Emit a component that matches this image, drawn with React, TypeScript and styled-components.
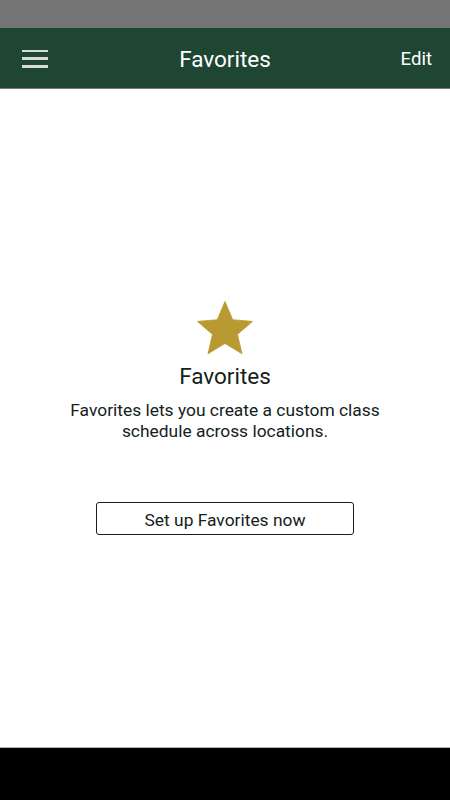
import React from "react";
import styled, { createGlobalStyle } from "styled-components";

const Global = createGlobalStyle`
  html, body { margin: 0; padding: 0; background: #ffffff; }
  body { font-family: Roboto, "Noto Sans", sans-serif; }
  #root { height: 800px; }
`;

const Screen = styled.div`
  width: 450px;
  height: 800px;
  display: flex;
  flex-direction: column;
  background: #ffffff;
`;

const StatusBar = styled.div`
  height: 28px;
  background: #757575;
  flex: none;
`;

const AppBar = styled.header`
  height: 60px;
  background: #1e4633;
  border-bottom: 1px solid #6f7f77;
  display: flex;
  align-items: center;
  justify-content: space-between;
  padding: 0 18px 0 22px;
  position: relative;
  flex: none;
`;

const MenuButton = styled.button`
  width: 26px;
  height: 18px;
  padding: 0;
  border: 0;
  background: transparent;
  display: flex;
  flex-direction: column;
  justify-content: space-between;
  margin-top: 1px;
`;

const MenuLine = styled.span`
  display: block;
  height: 2.5px;
  width: 26px;
  background: #d9ddd9;
`;

const Title = styled.h1`
  position: absolute;
  left: 0;
  right: 0;
  top: 0;
  bottom: 0;
  display: flex;
  align-items: center;
  justify-content: center;
  margin: 0;
  padding-top: 2px;
  font-size: 22.5px;
  font-weight: 400;
  color: #ffffff;
  pointer-events: none;
`;

const EditButton = styled.button`
  border: 0;
  background: transparent;
  color: #ffffff;
  font-family: Roboto, sans-serif;
  font-size: 18.6px;
  padding: 2px 0 0;
`;

const Content = styled.main`
  flex: 1;
  display: flex;
  flex-direction: column;
  align-items: center;
  padding-top: 207px;
`;

const StarIcon = styled.svg`
  width: 66px;
  height: 66px;
  display: block;
`;

const EmptyTitle = styled.h2`
  margin: 2px 0 0;
  font-size: 22.5px;
  line-height: 24px;
  font-weight: 400;
  color: #13221a;
`;

const Description = styled.p`
  margin: 12px 0 0;
  font-size: 17.4px;
  line-height: 21px;
  text-align: center;
  color: #13221a;
`;

const SetupButton = styled.button`
  margin-top: 60px;
  width: 258px;
  height: 33px;
  border: 1px solid #1b1b1b;
  border-radius: 3px;
  background: #ffffff;
  font-family: Roboto, sans-serif;
  font-size: 17.4px;
  color: #13221a;
  padding: 2px 0 0;
`;

const NavBar = styled.div`
  height: 52px;
  background: #000000;
  border-top: 1px solid #b0b0b0;
  flex: none;
`;

export default function App() {
  return (
    <>
      <Global />
      <Screen>
        <StatusBar />
        <AppBar>
          <MenuButton aria-label="menu">
            <MenuLine />
            <MenuLine />
            <MenuLine />
          </MenuButton>
          <Title>Favorites</Title>
          <EditButton>Edit</EditButton>
        </AppBar>
        <Content>
          <StarIcon viewBox="0 0 24 24">
            <path
              d="M12 17.27L18.18 21l-1.64-7.03L22 9.24l-7.19-.61L12 2 9.19 8.63 2 9.24l5.46 4.73L5.82 21z"
              fill="#b99a30"
              stroke="#b99a30"
              strokeWidth="0.3"
              strokeLinejoin="round"
            />
          </StarIcon>
          <EmptyTitle>Favorites</EmptyTitle>
          <Description>
            Favorites lets you create a custom class
            <br />
            schedule across locations.
          </Description>
          <SetupButton>Set up Favorites now</SetupButton>
        </Content>
        <NavBar />
      </Screen>
    </>
  );
}
